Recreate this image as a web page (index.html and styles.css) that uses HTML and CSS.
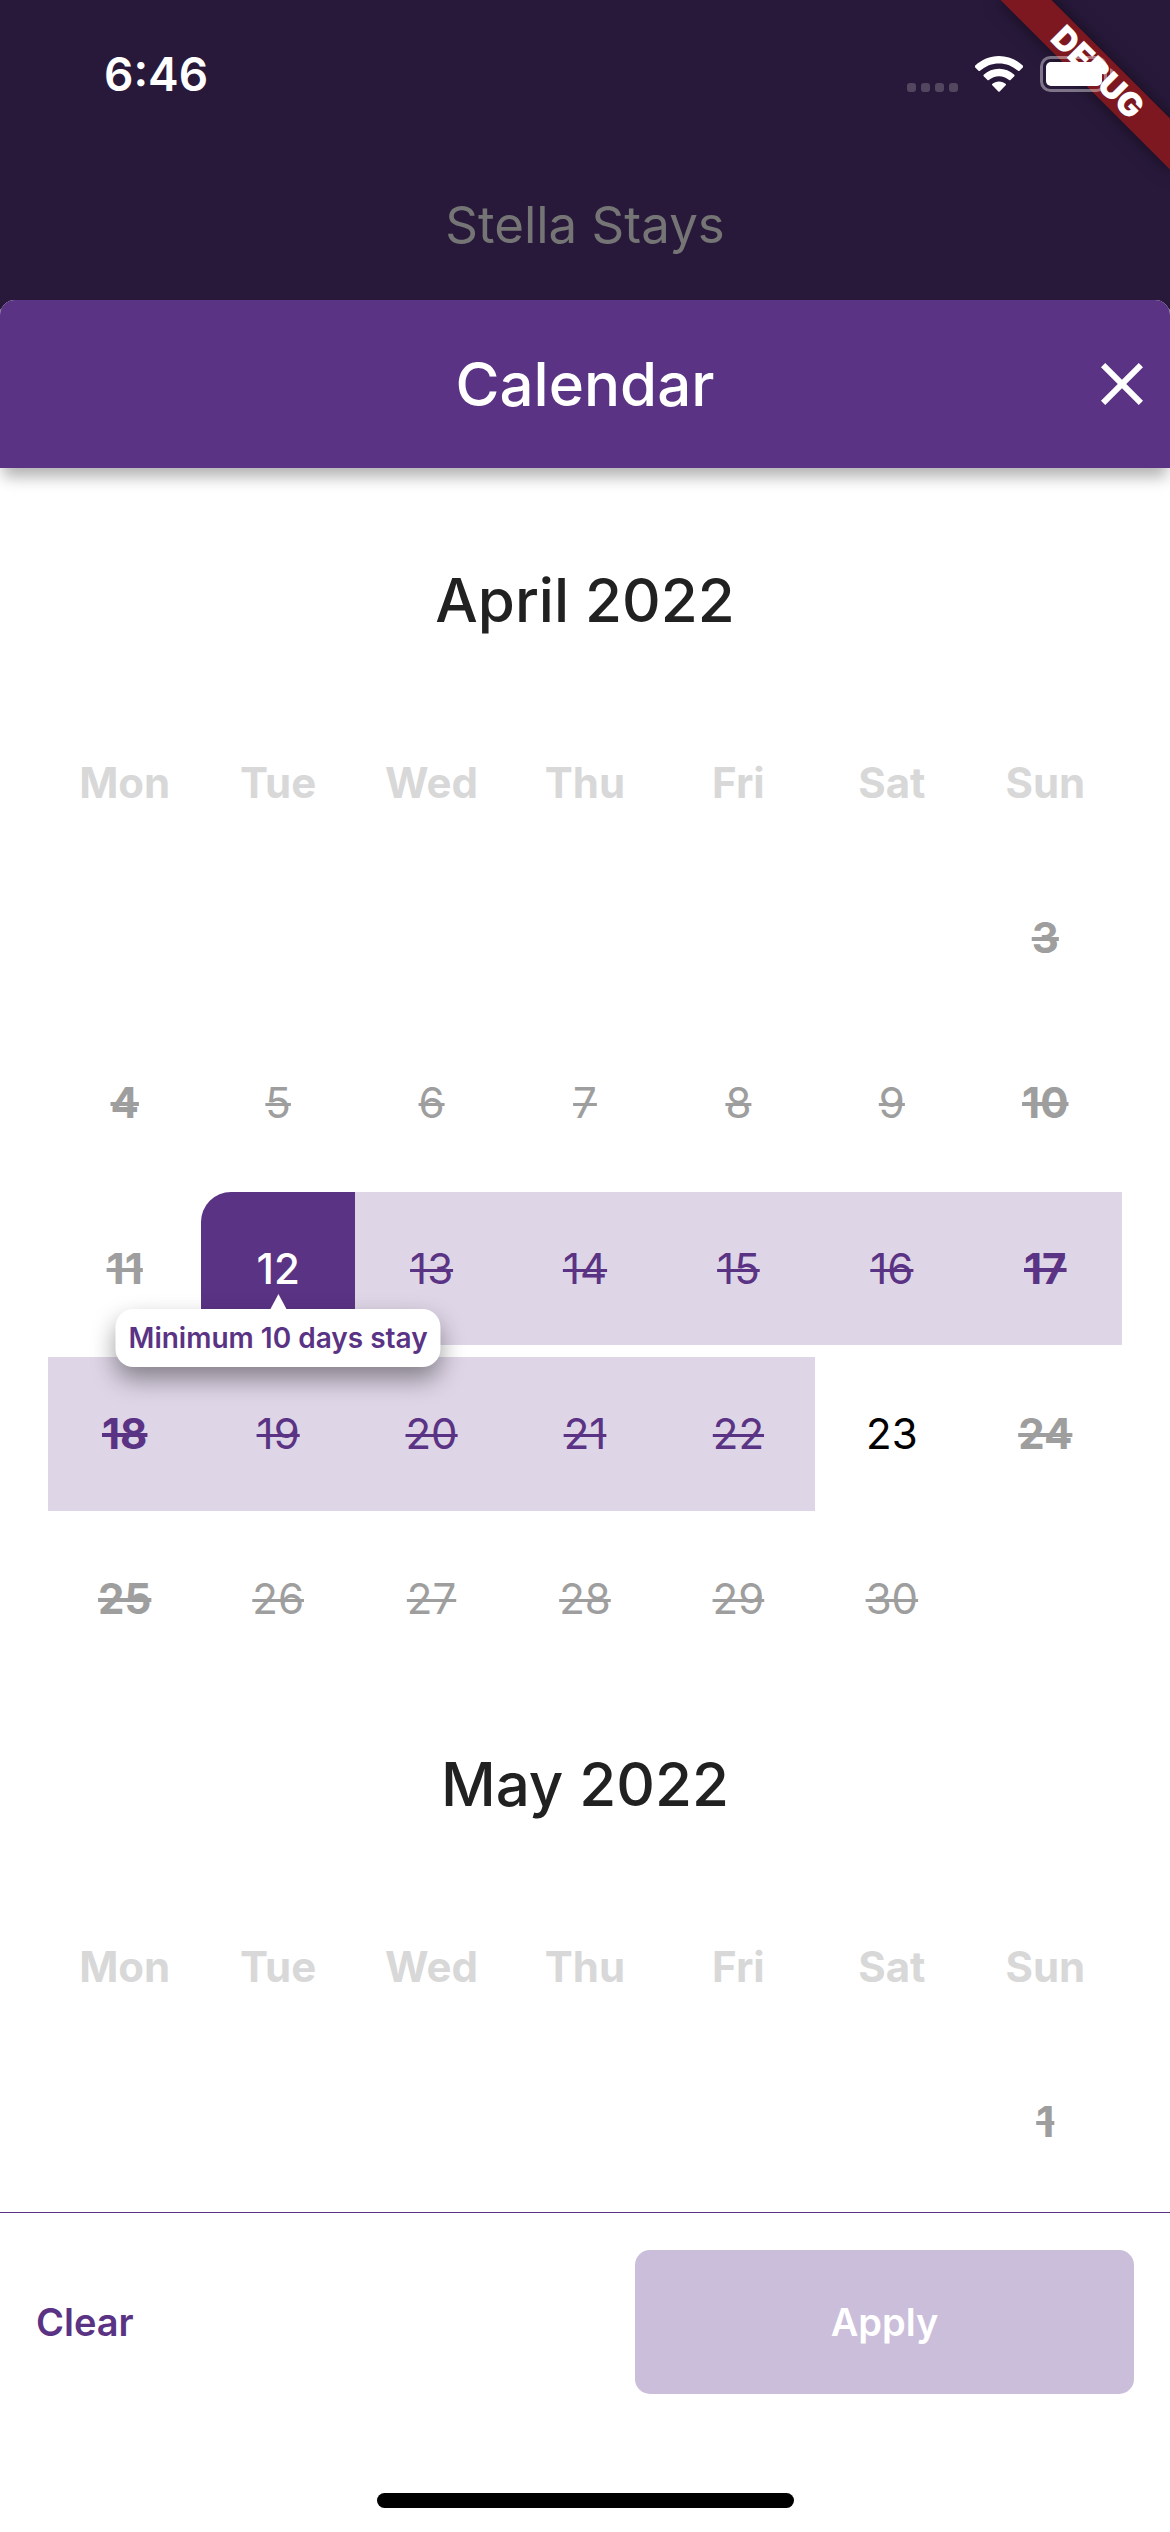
FILE: index.html
```html
<!DOCTYPE html>
<html lang="en">
<head>
  <meta charset="utf-8">
  <meta name="viewport" content="width=device-width, initial-scale=1">
  <title>Calendar - Stella Stays</title>
  <link rel="stylesheet" href="styles.css">
</head>
<body>
  <div class="app">
    <div class="topbar">
      <div class="ribbon-clip"><div class="ribbon">DEBUG</div></div>
      <div class="status">
        <span class="status-time">6:46</span>
        <div class="status-icons">
          <svg class="signal" viewBox="0 0 51 9" aria-hidden="true">
            <rect x="0" width="9" height="9" rx="3"/><rect x="14" width="9" height="9" rx="3"/>
            <rect x="28" width="9" height="9" rx="3"/><rect x="42" width="9" height="9" rx="3"/>
          </svg>
          <svg class="wifi" viewBox="0 0 48 36" aria-hidden="true">
            <path d="M24 0C33 0 41.500 3.600 48 9.800Q48.500 10.600 48 11.300L44.500 14.800Q43.700 15.400 43 14.800C37.500 9.900 31 7.400 24 7.400S10.500 9.900 5 14.800Q4.300 15.400 3.500 14.800L0 11.300Q-.5 10.600 0 9.800C6.500 3.600 15 0 24 0Z"/>
            <path d="M24 12.800C29.800 12.800 35.200 15 39.300 18.700Q39.900 19.500 39.300 20.200L35.500 24Q34.800 24.500 34.100 24C31.300 21.600 27.800 20.200 24 20.200S16.700 21.600 13.900 24Q13.200 24.500 12.500 24L8.700 20.200Q8.100 19.500 8.700 18.700C12.800 15 18.200 12.800 24 12.800Z"/>
            <path d="M24 25.400C26.600 25.400 29 26.300 30.800 27.900Q31.300 28.600 30.700 29.300L24.700 35.500Q24 36.100 23.300 35.500L17.300 29.300Q16.700 28.600 17.200 27.900C19 26.300 21.400 25.400 24 25.400Z"/>
          </svg>
          <svg class="battery" viewBox="0 0 74 36" aria-hidden="true">
            <rect x="1.500" y="1.500" width="64" height="33" rx="9" fill="none" stroke="#fff" stroke-opacity=".4" stroke-width="3"/>
            <rect x="6" y="6" width="56" height="24" rx="5" fill="#fff"/>
            <path d="M70 12C73 13.500 74 15.500 74 18S73 22.500 70 24Z" fill="#fff" fill-opacity=".45"/>
          </svg>
        </div>
      </div>
      <div class="brand">Stella Stays</div>
    </div>

    <main class="sheet">
      <header class="sheet-header">
        <h1 class="sheet-title">Calendar</h1>
        <button class="close" type="button" aria-label="Close">
          <svg viewBox="0 0 24 24" aria-hidden="true"><path d="M19 6.410 17.590 5 12 10.590 6.410 5 5 6.410 10.590 12 5 17.590 6.410 19 12 13.410 17.590 19 19 17.590 13.410 12Z"/></svg>
        </button>
      </header>

      <div class="months">
        <section class="month">
          <h2 class="month-title">April 2022</h2>
          <table class="grid">
            <thead>
              <tr><th>Mon</th><th>Tue</th><th>Wed</th><th>Thu</th><th>Fri</th><th>Sat</th><th>Sun</th></tr>
            </thead>
            <tbody>
              <tr>
                <td></td><td></td><td></td><td></td><td></td><td></td>
                <td><button class="day off edge" type="button">3</button></td>
              </tr>
              <tr>
                <td><button class="day off edge" type="button">4</button></td>
                <td><button class="day off" type="button">5</button></td>
                <td><button class="day off" type="button">6</button></td>
                <td><button class="day off" type="button">7</button></td>
                <td><button class="day off" type="button">8</button></td>
                <td><button class="day off" type="button">9</button></td>
                <td><button class="day off edge" type="button">10</button></td>
              </tr>
              <tr>
                <td><button class="day off edge" type="button">11</button></td>
                <td class="has-tip">
                  <button class="day start" type="button" aria-describedby="min-stay">12</button>
                  <div class="tip" id="min-stay" role="tooltip">Minimum 10 days stay</div>
                </td>
                <td><button class="day off range" type="button">13</button></td>
                <td><button class="day off range" type="button">14</button></td>
                <td><button class="day off range" type="button">15</button></td>
                <td><button class="day off range" type="button">16</button></td>
                <td><button class="day off range edge" type="button">17</button></td>
              </tr>
              <tr>
                <td><button class="day off range edge" type="button">18</button></td>
                <td><button class="day off range" type="button">19</button></td>
                <td><button class="day off range" type="button">20</button></td>
                <td><button class="day off range" type="button">21</button></td>
                <td><button class="day off range" type="button">22</button></td>
                <td><button class="day" type="button">23</button></td>
                <td><button class="day off edge" type="button">24</button></td>
              </tr>
              <tr>
                <td><button class="day off edge" type="button">25</button></td>
                <td><button class="day off" type="button">26</button></td>
                <td><button class="day off" type="button">27</button></td>
                <td><button class="day off" type="button">28</button></td>
                <td><button class="day off" type="button">29</button></td>
                <td><button class="day off" type="button">30</button></td>
                <td></td>
              </tr>
            </tbody>
          </table>
        </section>

        <section class="month">
          <h2 class="month-title">May 2022</h2>
          <table class="grid">
            <thead>
              <tr><th>Mon</th><th>Tue</th><th>Wed</th><th>Thu</th><th>Fri</th><th>Sat</th><th>Sun</th></tr>
            </thead>
            <tbody>
              <tr>
                <td></td><td></td><td></td><td></td><td></td><td></td>
                <td><button class="day off edge" type="button">1</button></td>
              </tr>
            </tbody>
          </table>
        </section>
      </div>

      <footer class="actions">
        <button class="clear" type="button">Clear</button>
        <button class="apply" type="button">Apply</button>
      </footer>
      <div class="home-indicator"></div>
    </main>
  </div>
</body>
</html>
```
FILE: styles.css
```css
:root {
  --purple: #5a3384;
  --night: #28193b;
  --range: #ded5e6;
  --muted: #9e9e9e;
}

* {
  box-sizing: border-box;
}

body {
  margin: 0;
  font-family: Inter, "Liberation Sans", sans-serif;
  color: #000;
}

button {
  margin: 0;
  padding: 0;
  border: 0;
  background: none;
  font: inherit;
  color: inherit;
  cursor: pointer;
}

.app {
  display: flex;
  flex-direction: column;
  height: 100vh;
  overflow: hidden;
  background: #808080;
}

/* Dimmed page behind the sheet */
.topbar {
  position: relative;
  padding-bottom: 7px;
  background: var(--night);
}

.status {
  position: relative;
  display: flex;
  align-items: center;
  justify-content: space-between;
  height: 148px;
  padding: 0 56px 0 104px;
  color: #fff;
}

.status-time {
  font-size: 46px;
  font-weight: 600;
  line-height: 56px;
}

.status-icons {
  display: flex;
  align-items: flex-end;
  gap: 17px;
}

.signal {
  width: 51px;
  height: 9px;
  fill: #53475f;
}

.wifi {
  width: 48px;
  height: 36px;
  fill: #fff;
}

.battery {
  width: 74px;
  height: 36px;
}

.brand {
  font-size: 51px;
  line-height: 154px;
  text-align: center;
  color: #757575;
}

.ribbon-clip {
  position: absolute;
  top: 0;
  right: 0;
  width: 240px;
  height: 240px;
  overflow: hidden;
}

.ribbon {
  position: absolute;
  top: 54px;
  right: -48px;
  width: 240px;
  background: #7e1820;
  box-shadow: 0 0 18px rgba(0, 0, 0, 0.5);
  font-size: 33px;
  font-weight: 900;
  line-height: 36px;
  text-align: center;
  color: #fff;
  transform: rotate(45deg);
}

.sheet {
  position: relative;
  display: flex;
  flex: 1;
  flex-direction: column;
  min-height: 0;
  margin-top: -9px;
  border-radius: 15px 15px 0 0;
  background: #fff;
}

.sheet-header {
  position: relative;
  display: grid;
  grid-template-columns: 72px 1fr 72px;
  align-items: center;
  height: 168px;
  padding: 0 12px;
  border-radius: 15px 15px 0 0;
  background: var(--purple);
  box-shadow: 0 12px 15px -3px rgba(0, 0, 0, 0.3);
  color: #fff;
  z-index: 1;
}

.sheet-title {
  grid-column: 2;
  margin: 0;
  font-size: 60px;
  font-weight: 500;
  line-height: 72px;
  text-align: center;
}

.close svg {
  display: block;
  width: 72px;
  height: 72px;
  fill: currentColor;
}

.months {
  flex: 1;
  min-height: 0;
  padding: 24px 48px 0;
  overflow: hidden auto;
  scrollbar-width: none;
}

.month {
  padding-top: 72px;
}

.month-title {
  margin: 0 0 123px;
  font-size: 60px;
  font-weight: 500;
  line-height: 72px;
  text-align: center;
  color: #212121;
}

.grid,
.grid thead {
  display: block;
}

.grid tbody {
  display: flex;
  flex-direction: column;
  gap: 12px;
  padding-top: 54px;
}

.grid tr {
  display: grid;
  grid-template-columns: repeat(7, 1fr);
}

.grid th {
  padding: 0;
  font-size: 42px;
  font-weight: 700;
  line-height: 48px;
  color: #d8d8d8;
}

.grid td {
  padding: 0;
}

.day {
  display: block;
  width: 100%;
  aspect-ratio: 1;
  font-size: 42px;
  line-height: 48px;
  text-align: center;
}

.off {
  color: var(--muted);
  text-decoration: line-through;
  text-decoration-thickness: 3px;
}

.edge {
  font-weight: 700;
  text-decoration-thickness: 4px;
}

.range {
  background: var(--range);
  color: var(--purple);
}

.start {
  border-radius: 30px 0 0 30px;
  background: var(--purple);
  font-weight: 500;
  color: #fff;
}

.has-tip {
  position: relative;
}

.tip {
  position: absolute;
  top: 117px;
  left: 50%;
  padding: 0 13px;
  border-radius: 18px;
  background: #fff;
  box-shadow: 0 12px 24px rgba(0, 0, 0, 0.4);
  font-size: 28px;
  font-weight: 600;
  line-height: 58px;
  white-space: nowrap;
  color: var(--purple);
  transform: translateX(-50%);
  z-index: 1;
}

.tip::before {
  content: "";
  position: absolute;
  bottom: 100%;
  left: 50%;
  margin-left: -8px;
  border: 8px solid transparent;
  border-top: 0;
  border-bottom: 15px solid #fff;
}

.actions {
  display: grid;
  grid-template-columns: 1fr 1fr;
  gap: 100px;
  align-items: center;
  padding: 37px 36px 0;
  border-top: 1px solid var(--purple);
  font-size: 38px;
  font-weight: 600;
  line-height: 48px;
}

.clear {
  justify-self: start;
  color: var(--purple);
}

.apply {
  height: 144px;
  border-radius: 15px;
  background: #cbbeda;
  color: #fff;
}

.home-indicator {
  width: 417px;
  height: 15px;
  margin: 99px auto 24px;
  border-radius: 8px;
  background: #000;
}
```
